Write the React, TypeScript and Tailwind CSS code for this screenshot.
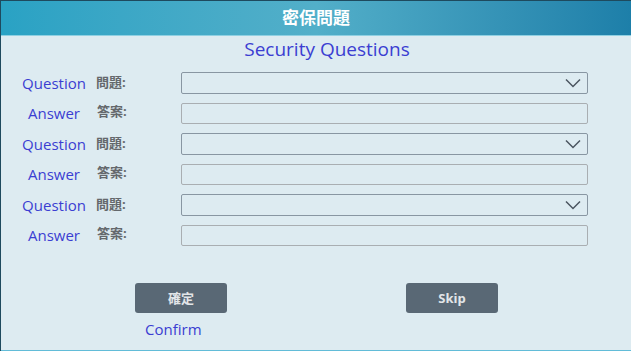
const ROWS = [
  { kind: "q", en: "Question", zh: "問題:" },
  { kind: "a", en: "Answer", zh: "答案:" },
  { kind: "q", en: "Question", zh: "問題:" },
  { kind: "a", en: "Answer", zh: "答案:" },
  { kind: "q", en: "Question", zh: "問題:" },
  { kind: "a", en: "Answer", zh: "答案:" },
];

const FONT = { fontFamily: '"Open Sans", "Noto Sans CJK TC", sans-serif' };

function Chevron() {
  return (
    <svg width="16" height="10" viewBox="0 0 16 10" fill="none">
      <path d="M1 1.5 L8 8.5 L15 1.5" stroke="#4a5560" strokeWidth="1.5" />
    </svg>
  );
}

export default function App() {
  return (
    <div
      className="flex h-[351px] w-[631px] flex-col overflow-hidden border-l border-t border-[#1e4a5e] bg-[#ddebf1]"
      style={FONT}
    >
      <div className="flex h-[35px] shrink-0 items-center justify-center border-b border-[#8fd0e2] bg-gradient-to-r from-[#29a2c4] via-[#52afc9] to-[#1d7fa9]">
        <span className="text-[17px] font-bold text-white">密保問題</span>
      </div>

      <div className="flex h-[32px] shrink-0 items-start justify-center pl-[22px]">
        <span className="text-[19px] leading-[26px] text-[#3b3ed2]">Security Questions</span>
      </div>

      <div className="flex flex-col">
        {ROWS.map((row, i) => (
          <div key={i} className="flex h-[30.4px] items-center">
            <div className="ml-[16px] w-[74px] text-center text-[15px] text-[#3b3ed2]">
              {row.en}
            </div>
            <div
              className={`w-[90px] text-[13px] font-bold text-[#64686c] ${
                row.kind === "a" ? "pl-[6px] -mt-[3px]" : "pl-[5px]"
              }`}
            >
              {row.zh}
            </div>
            {row.kind === "q" ? (
              <div className="flex h-[22px] w-[407px] items-center justify-end rounded-[2px] border border-[#8896a2] pr-[6px]">
                <Chevron />
              </div>
            ) : (
              <div className="h-[21px] w-[407px] rounded-[2px] border border-[#a9aeb2]" />
            )}
          </div>
        ))}
      </div>

      <div className="mt-[33px] flex">
        <div className="ml-[134px] flex flex-col">
          <button
            type="button"
            className="h-[30px] w-[92px] rounded-[3px] bg-[#596875] text-[13px] font-bold text-[#e2e5e8]"
          >
            確定
          </button>
          <span className="ml-[10px] mt-[5px] text-[15px] text-[#3b3ed2]">Confirm</span>
        </div>
        <div className="ml-[179px]">
          <button
            type="button"
            className="h-[30px] w-[92px] rounded-[3px] bg-[#596875] text-[13px] font-bold text-[#e2e5e8]"
          >
            Skip
          </button>
        </div>
      </div>

      <div className="mt-auto h-px bg-[#62bcd8]" />
    </div>
  );
}
